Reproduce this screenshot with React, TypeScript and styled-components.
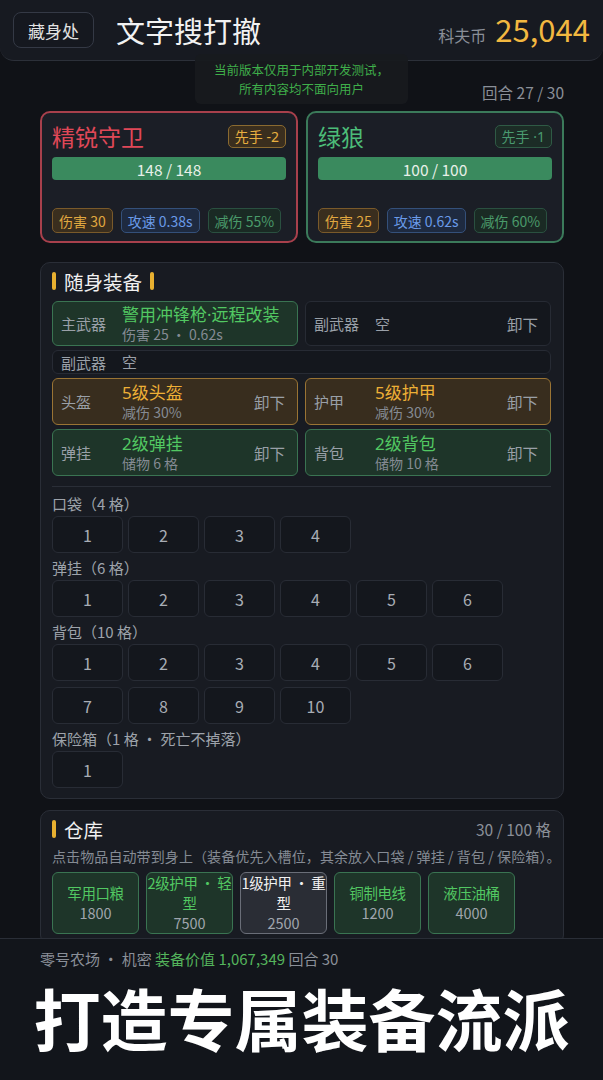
import styled, { createGlobalStyle } from "styled-components";

const GlobalStyle = createGlobalStyle`
  * { box-sizing: border-box; }
  body {
    margin: 0;
    background: #101217;
    font-family: "Noto Sans CJK SC", "Noto Sans", sans-serif;
    color: #e8e8e8;
  }
`;

type Tone = "green" | "gold" | "blue" | "red" | "empty" | "grey";

const tones: Record<Tone, { bg: string; border: string; text: string }> = {
  green: { bg: "#1e3529", border: "#3a7452", text: "#52c862" },
  gold: { bg: "#382d1e", border: "#9a7434", text: "#eeb036" },
  blue: { bg: "#1d2940", border: "#33507c", text: "#6a9ae6" },
  red: { bg: "#1b1e26", border: "#a8404c", text: "#e04858" },
  empty: { bg: "#14171d", border: "#272b34", text: "#9aa0a8" },
  grey: { bg: "#2a2d35", border: "#6a6e78", text: "#f0f0f0" },
};

const latinFirst = `"Noto Sans", "Noto Sans CJK SC", sans-serif`;

const Screen = styled.div`
  position: relative;
  height: 100vh;
  display: flex;
  flex-direction: column;
  overflow: hidden;
`;

const Header = styled.header`
  height: 61px;
  flex-shrink: 0;
  display: flex;
  align-items: center;
  padding: 0 13px;
  background: #171a21;
  border-bottom: 1px solid #2c3039;
  border-radius: 0 0 14px 14px;
`;

const HomeButton = styled.div`
  width: 81px;
  height: 36px;
  display: flex;
  align-items: center;
  justify-content: center;
  border: 1px solid #343945;
  border-radius: 8px;
  background: #15181f;
  font-size: 17px;
  color: #e2e2e2;
`;

const AppTitle = styled.h1`
  margin: 0 0 0 22px;
  font-size: 29px;
  font-weight: 400;
  color: #f2f2f2;
  flex: 1;
`;

const Coins = styled.div`
  display: flex;
  align-items: baseline;
  gap: 9px;
  span {
    font-size: 16px;
    color: #8a8f98;
  }
  strong {
    font-size: 31px;
    font-weight: 400;
    color: #f2b840;
    line-height: 1;
  }
`;

const Toast = styled.div`
  position: absolute;
  top: 54px;
  left: 195px;
  width: 213px;
  height: 50px;
  display: flex;
  flex-direction: column;
  align-items: center;
  justify-content: center;
  background: rgba(24, 26, 30, 0.96);
  border-radius: 6px;
  font-size: 12.5px;
  line-height: 19px;
  color: #3fae4a;
`;

const Main = styled.main`
  flex: 1;
  overflow: hidden;
  padding: 0 39px 0 40px;
`;

const RoundRow = styled.div`
  margin-top: 20px;
  height: 22px;
  text-align: right;
  font-size: 15.5px;
  line-height: 22px;
  color: #8a8f98;
`;

const Fighters = styled.div`
  margin-top: 8px;
  display: grid;
  grid-template-columns: 1fr 1fr;
  gap: 8px;
`;

const FighterCard = styled.div<{ $tone: Tone }>`
  height: 132px;
  padding: 10px 10px 8px;
  display: flex;
  flex-direction: column;
  background: #1b1e26;
  border: 2px solid ${(p) => (p.$tone === "red" ? "#a8404c" : "#3b7a5a")};
  border-radius: 10px;
`;

const FighterTop = styled.div`
  display: flex;
  align-items: center;
  justify-content: space-between;
  height: 26px;
`;

const FighterName = styled.div<{ $tone: Tone }>`
  font-size: 23px;
  color: ${(p) => (p.$tone === "red" ? "#e04858" : "#4cbc78")};
`;

const Badge = styled.div<{ $tone: Tone }>`
  height: 23px;
  padding: 0 6px;
  display: flex;
  align-items: center;
  font-family: ${latinFirst};
  font-size: 14px;
  border-radius: 5px;
  color: ${(p) => (p.$tone === "gold" ? "#e8b040" : "#4a9a70")};
  background: ${(p) => (p.$tone === "gold" ? "#3a2e1e" : "#1c2c26")};
  border: 1px solid ${(p) => (p.$tone === "gold" ? "#8a6a30" : "#2f5a45")};
`;

const HpBar = styled.div`
  margin-top: 8px;
  height: 23px;
  border-radius: 4px;
  background: #3a8a5e;
  display: flex;
  align-items: center;
  justify-content: center;
  font-size: 15.5px;
  color: #e8f0e8;
`;

const Stats = styled.div`
  margin-top: auto;
  display: flex;
  gap: 8px;
`;

const StatChip = styled.div<{ $tone: Tone }>`
  height: 25px;
  padding: 0 6px;
  display: flex;
  align-items: center;
  font-size: 14px;
  border-radius: 5px;
  color: ${(p) =>
    p.$tone === "gold" ? "#e0a840" : p.$tone === "blue" ? "#6a9ae8" : "#4a9a6a"};
  background: ${(p) =>
    p.$tone === "gold" ? "#3a2e1e" : p.$tone === "blue" ? "#1e2a40" : "#1a2a24"};
  border: 1px solid
    ${(p) =>
      p.$tone === "gold" ? "#7a5a2a" : p.$tone === "blue" ? "#34507a" : "#2a5040"};
`;

const Panel = styled.section<{ $gap: number }>`
  margin-top: ${(p) => p.$gap}px;
  padding: 5px 12px 10px 11px;
  background: #181b22;
  border: 1px solid #2a2e37;
  border-radius: 10px;
`;

const PanelHead = styled.div`
  height: 26px;
  display: flex;
  align-items: center;
  justify-content: space-between;
`;

const PanelTitle = styled.h2`
  margin: 0;
  display: flex;
  align-items: center;
  gap: 8px;
  font-size: 19.5px;
  font-weight: 400;
  color: #f0f0f0;
`;

const GoldBar = styled.i`
  width: 4px;
  height: 18px;
  border-radius: 2px;
  background: #e8b030;
`;

const PanelMeta = styled.span`
  font-size: 15.5px;
  color: #8a8f98;
`;

const EquipGrid = styled.div`
  margin-top: 7px;
  display: grid;
  grid-template-columns: 1fr 1fr;
  column-gap: 7px;
  row-gap: 4px;
`;

const EquipSlot = styled.div<{ $tone: Tone; $h: number; $wide?: boolean }>`
  grid-column: ${(p) => (p.$wide ? "1 / -1" : "auto")};
  height: ${(p) => p.$h}px;
  padding: 0 12px 0 8px;
  display: flex;
  align-items: center;
  background: ${(p) => tones[p.$tone].bg};
  border: 1px solid ${(p) => tones[p.$tone].border};
  border-radius: 6px;
`;

const SlotLabel = styled.span`
  width: 61px;
  flex-shrink: 0;
  font-size: 15px;
  color: #9aa0a8;
`;

const SlotBody = styled.div`
  flex: 1;
  display: flex;
  flex-direction: column;
  line-height: 20px;
`;

const SlotName = styled.span<{ $tone: Tone }>`
  font-family: ${latinFirst};
  font-size: ${(p) => (p.$tone === "empty" ? 15 : 17)}px;
  color: ${(p) => (p.$tone === "empty" ? "#9aa0a8" : tones[p.$tone].text)};
`;

const SlotSub = styled.span`
  font-size: 14px;
  line-height: 18px;
  color: #858b94;
`;

const Unequip = styled.span`
  font-size: 15.5px;
  color: #9aa0a8;
`;

const Divider = styled.hr`
  margin: 10px 0 6px;
  border: 0;
  border-top: 1px solid #2a2e37;
`;

const Group = styled.div`
  & + & {
    margin-top: 4px;
  }
`;

const GroupLabel = styled.div`
  font-size: 15px;
  line-height: 22px;
  color: #9ea3ab;
  margin-bottom: 1px;
`;

const SlotRow = styled.div`
  display: grid;
  grid-template-columns: repeat(6, 71px);
  column-gap: 5px;
  row-gap: 6px;
`;

const Cell = styled.div`
  height: 37px;
  display: flex;
  align-items: center;
  justify-content: center;
  background: #14171d;
  border: 1px solid #282c35;
  border-radius: 6px;
  font-size: 16px;
  color: #a8adb5;
`;

const Hint = styled.p`
  margin: 4px 0 6px;
  font-size: 14px;
  line-height: 20px;
  color: #858b94;
  white-space: nowrap;
  letter-spacing: 0.1px;
`;

const Items = styled.div`
  display: flex;
  gap: 7px;
`;

const Item = styled.div<{ $tone: Tone }>`
  width: 87px;
  min-height: 60px;
  padding: 0;
  display: flex;
  flex-direction: column;
  align-items: center;
  justify-content: center;
  text-align: center;
  line-height: 20px;
  background: ${(p) => tones[p.$tone].bg};
  border: 1px solid ${(p) => tones[p.$tone].border};
  border-radius: 6px;
`;

const ItemName = styled.span<{ $tone: Tone }>`
  font-size: 14.5px;
  letter-spacing: -0.4px;
  color: ${(p) => tones[p.$tone].text};
`;

const ItemValue = styled.span`
  font-size: 14.5px;
  color: #a0a5ad;
`;

const Footer = styled.footer`
  height: 142px;
  flex-shrink: 0;
  padding: 10px 40px 0;
  background: #12151b;
  border-top: 1px solid #2a2e37;
`;

const FooterInfo = styled.div`
  font-size: 15px;
  line-height: 20px;
  color: #8a8f98;
  em {
    font-style: normal;
    color: #54b45c;
  }
`;

const Slogan = styled.div`
  margin: 9px -40px 0;
  text-align: center;
  font-size: 67px;
  line-height: 78px;
  font-weight: 700;
  color: #ffffff;
`;

const fighters = [
  {
    name: "精锐守卫",
    tone: "red" as Tone,
    badge: "先手 -2",
    badgeTone: "gold" as Tone,
    hp: "148 / 148",
    stats: ["伤害 30", "攻速 0.38s", "减伤 55%"],
  },
  {
    name: "绿狼",
    tone: "green" as Tone,
    badge: "先手 ·1",
    badgeTone: "green" as Tone,
    hp: "100 / 100",
    stats: ["伤害 25", "攻速 0.62s", "减伤 60%"],
  },
];
const statTones: Tone[] = ["gold", "blue", "green"];

const equips: {
  label: string;
  name: string;
  sub?: string;
  tone: Tone;
  h: number;
  wide?: boolean;
  unequip?: boolean;
}[] = [
  { label: "主武器", name: "警用冲锋枪·远程改装", sub: "伤害 25 · 0.62s", tone: "green", h: 45 },
  { label: "副武器", name: "空", tone: "empty", h: 45, unequip: true },
  { label: "副武器", name: "空", tone: "empty", h: 24, wide: true },
  { label: "头盔", name: "5级头盔", sub: "减伤 30%", tone: "gold", h: 47, unequip: true },
  { label: "护甲", name: "5级护甲", sub: "减伤 30%", tone: "gold", h: 47, unequip: true },
  { label: "弹挂", name: "2级弹挂", sub: "储物 6 格", tone: "green", h: 47, unequip: true },
  { label: "背包", name: "2级背包", sub: "储物 10 格", tone: "green", h: 47, unequip: true },
];

const groups = [
  { label: "口袋（4 格）", count: 4 },
  { label: "弹挂（6 格）", count: 6 },
  { label: "背包（10 格）", count: 10 },
  { label: "保险箱（1 格 · 死亡不掉落）", count: 1 },
];

const stash: { name: string; value: number; tone: Tone }[] = [
  { name: "军用口粮", value: 1800, tone: "green" },
  { name: "2级护甲 · 轻型", value: 7500, tone: "green" },
  { name: "1级护甲 · 重型", value: 2500, tone: "grey" },
  { name: "铜制电线", value: 1200, tone: "green" },
  { name: "液压油桶", value: 4000, tone: "green" },
];

const App = () => {
  return (
    <>
      <GlobalStyle />
      <Screen>
        <Header>
          <HomeButton>藏身处</HomeButton>
          <AppTitle>文字搜打撤</AppTitle>
          <Coins>
            <span>科夫币</span>
            <strong>25,044</strong>
          </Coins>
        </Header>
        <Toast>
          <div>当前版本仅用于内部开发测试，</div>
          <div>所有内容均不面向用户</div>
        </Toast>
        <Main>
          <RoundRow>回合 27 / 30</RoundRow>
          <Fighters>
            {fighters.map((f) => (
              <FighterCard key={f.name} $tone={f.tone}>
                <FighterTop>
                  <FighterName $tone={f.tone}>{f.name}</FighterName>
                  <Badge $tone={f.badgeTone}>{f.badge}</Badge>
                </FighterTop>
                <HpBar>{f.hp}</HpBar>
                <Stats>
                  {f.stats.map((s, i) => (
                    <StatChip key={s} $tone={statTones[i]}>
                      {s}
                    </StatChip>
                  ))}
                </Stats>
              </FighterCard>
            ))}
          </Fighters>

          <Panel $gap={19}>
            <PanelHead>
              <PanelTitle>
                <GoldBar />
                随身装备
                <GoldBar />
              </PanelTitle>
            </PanelHead>
            <EquipGrid>
              {equips.map((e, i) => (
                <EquipSlot key={i} $tone={e.tone} $h={e.h} $wide={e.wide}>
                  <SlotLabel>{e.label}</SlotLabel>
                  <SlotBody>
                    <SlotName $tone={e.tone}>{e.name}</SlotName>
                    {e.sub && <SlotSub>{e.sub}</SlotSub>}
                  </SlotBody>
                  {e.unequip && <Unequip>卸下</Unequip>}
                </EquipSlot>
              ))}
            </EquipGrid>
            <Divider />
            {groups.map((g) => (
              <Group key={g.label}>
                <GroupLabel>{g.label}</GroupLabel>
                <SlotRow>
                  {Array.from({ length: g.count }, (_, i) => (
                    <Cell key={i}>{i + 1}</Cell>
                  ))}
                </SlotRow>
              </Group>
            ))}
          </Panel>

          <Panel $gap={11}>
            <PanelHead>
              <PanelTitle>
                <GoldBar />
                仓库
              </PanelTitle>
              <PanelMeta>30 / 100 格</PanelMeta>
            </PanelHead>
            <Hint>
              点击物品自动带到身上（装备优先入槽位，其余放入口袋 / 弹挂 / 背包 / 保险箱）。
            </Hint>
            <Items>
              {stash.map((it) => (
                <Item key={it.name} $tone={it.tone}>
                  <ItemName $tone={it.tone}>{it.name}</ItemName>
                  <ItemValue>{it.value}</ItemValue>
                </Item>
              ))}
            </Items>
          </Panel>
        </Main>
        <Footer>
          <FooterInfo>
            零号农场 · 机密 <em>装备价值 1,067,349</em> 回合 30
          </FooterInfo>
          <Slogan>打造专属装备流派</Slogan>
        </Footer>
      </Screen>
    </>
  );
};

export default App;
